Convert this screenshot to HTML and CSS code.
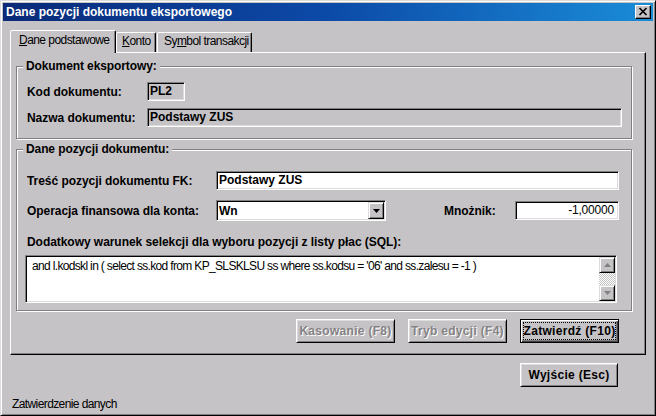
FILE: index.html
```html
<!DOCTYPE html>
<html lang="pl">
<head>
<meta charset="utf-8">
<title>Dane pozycji dokumentu eksportowego</title>
<link rel="stylesheet" href="styles.css">
</head>
<body>
<div class="window">
  <div class="titlebar">
    <span class="title">Dane pozycji dokumentu eksportowego</span>
    <span class="close-btn">
      <svg width="14" height="12" viewBox="0 0 14 12"><path d="M3.5 2 L10.5 9 M10.5 2 L3.5 9" stroke="#000" stroke-width="1.7" fill="none"/></svg>
    </span>
  </div>
  <div class="tabs">
    <div class="tab tab-active"><u>D</u>ane podstawowe</div>
    <div class="tab tab-konto"><u>K</u>onto</div>
    <div class="tab tab-symbol">Sy<u>m</u>bol transakcji</div>
  </div>
  <div class="panel">
    <div class="group group-doc">
      <div class="group-head"><span class="group-title">Dokument eksportowy:</span></div>
      <div class="row row-kod">
        <span class="label label-doc">Kod dokumentu:</span>
        <span class="field field-ro field-kod">PL2</span>
      </div>
      <div class="row row-nazwa">
        <span class="label label-doc">Nazwa dokumentu:</span>
        <span class="field field-ro field-nazwa">Podstawy ZUS</span>
      </div>
    </div>
    <div class="group group-pos">
      <div class="group-head"><span class="group-title">Dane pozycji dokumentu:</span></div>
      <div class="row row-tresc">
        <span class="label label-pos">Treść pozycji dokumentu FK:</span>
        <span class="field field-edit field-tresc">Podstawy ZUS</span>
      </div>
      <div class="row row-oper">
        <span class="label label-pos">Operacja finansowa dla konta:</span>
        <span class="combo">
          <span class="combo-text">Wn</span>
          <span class="combo-btn"><svg width="7" height="4" viewBox="0 0 7 4"><path d="M0 0 H7 L3.5 4 Z" fill="#000"/></svg></span>
        </span>
        <span class="label label-mn">Mnożnik:</span>
        <span class="field field-edit field-mn">-1,00000</span>
      </div>
      <div class="label sql-label">Dodatkowy warunek selekcji dla wyboru pozycji z listy płac (SQL):</div>
      <div class="memo">
        <div class="memo-text">and l.kodskl in ( select ss.kod from KP_SLSKLSU ss where ss.kodsu = '06' and ss.zalesu = -1 )</div>
        <div class="scrollbar">
          <span class="sb-btn"><svg width="7" height="4" viewBox="0 0 7 4"><path d="M0 4 H7 L3.5 0 Z" fill="#808080"/></svg></span>
          <span class="sb-track"></span>
          <span class="sb-btn"><svg width="7" height="4" viewBox="0 0 7 4"><path d="M0 0 H7 L3.5 4 Z" fill="#808080"/></svg></span>
        </div>
      </div>
    </div>
    <div class="actions">
      <div class="btn btn-disabled">Kasowanie (F8)</div>
      <div class="btn btn-disabled">Tryb edycji (F4)</div>
      <div class="btn btn-default"><span class="focus">Zatwierdź (F10)</span></div>
    </div>
  </div>
  <div class="footer">
    <div class="btn btn-exit">Wyjście (Esc)</div>
  </div>
  <div class="status">Zatwierdzenie danych</div>
</div>
</body>
</html>
```

FILE: styles.css
```css
* { box-sizing: border-box; }
html, body { margin: 0; padding: 0; }
body {
  width: 656px;
  height: 416px;
  overflow: hidden;
  background: #c6c3c6;
  font-family: "Liberation Sans", Arial, sans-serif;
  font-size: 12px;
  color: #000;
}
.window {
  width: 656px;
  height: 416px;
  border: 1px solid;
  border-color: #dcdcdc #000 #000 #dcdcdc;
  box-shadow: inset 1px 1px #fff, inset -1px -1px #808080;
  padding: 2px;
  background: #c6c3c6;
}
.titlebar {
  height: 18px;
  display: flex;
  align-items: center;
  justify-content: space-between;
  padding: 0 2px 0 3px;
  background: linear-gradient(to right, #0a2a78 0%, #0c4aa8 50%, #1a8cd8 100%);
  color: #fff;
  font-weight: bold;
  font-size: 12px;
}
.close-btn {
  width: 16px;
  height: 14px;
  background: #c6c3c6;
  border: 1px solid;
  border-color: #fff #000 #000 #fff;
  box-shadow: inset -1px -1px #808080;
  display: flex;
}
.close-btn svg { display: block; }

/* tabs */
.tabs {
  display: flex;
  align-items: flex-end;
  height: 22px;
  margin-top: 9px;
  padding-left: 7px;
  position: relative;
  z-index: 1;
}
.tab {
  height: 20px;
  border: 1px solid;
  border-bottom: none;
  border-color: #fff #000 transparent #fff;
  border-radius: 2px 2px 0 0;
  box-shadow: inset -1px 0 #808080;
  background: #c6c3c6;
  line-height: 14px;
  padding-top: 1px;
  letter-spacing: -0.55px;
  white-space: nowrap;
}
.tab-active {
  width: 106px;
  height: 23px;
  margin-bottom: -1px;
  padding-left: 8px;
  padding-top: 2px;
}
.tab-konto { width: 40px; padding-left: 5px; }
.tab-symbol { width: 95px; margin-left: 1px; padding-left: 6px; }

/* panel */
.panel {
  margin-left: 7px;
  width: 636px;
  height: 303px;
  border: 1px solid;
  border-color: #fff #000 #000 #fff;
  box-shadow: inset -1px -1px #808080;
  padding: 13px 12px 0 5px;
}
.group {
  width: 616px;
  border: 1px solid #808080;
  box-shadow: inset 1px 1px #fff, 1px 1px #fff;
  padding: 0 12px 0 10px;
}
.group-doc { padding-right: 9px; padding-bottom: 11px; }
.group-pos { margin-top: 10px; padding-bottom: 7px; }
.group-head {
  height: 14px;
  margin-top: -8px;
}
.group-title {
  display: inline-block;
  vertical-align: top;
  line-height: 14px;
  padding: 0 3px;
  margin-left: -4px;
  background: #c6c3c6;
  font-weight: bold;
  letter-spacing: -0.1px;
}
.row { display: flex; align-items: center; }
.label {
  font-weight: bold;
  letter-spacing: -0.05px;
  white-space: nowrap;
  flex-shrink: 0;
}
.label-doc { width: 120px; }
.label-pos { width: 189px; }
.label-mn { width: 71px; margin-left: auto; }
.row-kod { margin-top: 9px; height: 19px; }
.row-nazwa { margin-top: 7px; height: 19px; }
.row-tresc { margin-top: 15px; height: 19px; }
.row-oper { margin-top: 10px; height: 21px; }
.sql-label { margin-top: 14px; line-height: 14px; }

.field {
  flex-shrink: 0;
  height: 19px;
  border: 1px solid;
  border-color: #808080 #fff #fff #808080;
  box-shadow: inset 1px 1px #000, inset -1px -1px #dcdcdc;
  padding: 0 2px;
  line-height: 17px;
  font-weight: bold;
  letter-spacing: 0;
  white-space: nowrap;
}
.field-ro { background: #c6c3c6; }
.field-edit { background: #fff; }
.field-kod { width: 38px; }
.field-nazwa { width: 475px; }
.field-tresc { width: 403px; }
.field-mn {
  width: 104px;
  text-align: right;
  padding-right: 4px;
  font-weight: normal;
  letter-spacing: -0.2px;
}

.combo {
  flex-shrink: 0;
  width: 170px;
  height: 21px;
  border: 1px solid;
  border-color: #808080 #fff #fff #808080;
  box-shadow: inset 1px 1px #000, inset -1px -1px #dcdcdc;
  background: #fff;
  padding: 1px;
  display: flex;
  align-items: center;
}
.combo-text {
  flex: 1;
  padding-left: 1px;
  font-weight: bold;
}
.combo-btn {
  width: 16px;
  height: 17px;
  background: #c6c3c6;
  border: 1px solid;
  border-color: #dcdcdc #000 #000 #dcdcdc;
  box-shadow: inset 1px 1px #fff, inset -1px -1px #808080;
  display: flex;
  align-items: center;
  justify-content: center;
}
.combo-btn svg, .sb-btn svg { display: block; }

.memo {
  margin-top: 6px;
  margin-left: -2px;
  width: 592px;
  height: 48px;
  border: 1px solid;
  border-color: #808080 #fff #fff #808080;
  box-shadow: inset 1px 1px #000, inset -1px -1px #dcdcdc;
  padding: 1px;
  background: #fff;
  display: flex;
}
.memo-text {
  flex: 1;
  padding: 2px 0 0 5px;
  line-height: 14px;
  letter-spacing: -0.66px;
  white-space: nowrap;
  overflow: hidden;
}
.scrollbar {
  width: 16px;
  display: flex;
  flex-direction: column;
}
.sb-btn {
  height: 16px;
  background: #c6c3c6;
  border: 1px solid;
  border-color: #dcdcdc #000 #000 #dcdcdc;
  box-shadow: inset 1px 1px #fff, inset -1px -1px #808080;
  display: flex;
  align-items: center;
  justify-content: center;
}
.sb-track {
  flex: 1;
  background: repeating-conic-gradient(#fff 0 25%, #c6c3c6 0 50%) 0 0 / 2px 2px;
}

.actions {
  display: flex;
  justify-content: flex-end;
  gap: 13px;
  margin-top: 8px;
  padding-right: 14px;
}
.btn {
  width: 99px;
  height: 24px;
  border: 1px solid;
  border-color: #fff #000 #000 #fff;
  box-shadow: inset 1px 1px #dcdcdc, inset -1px -1px #808080;
  display: flex;
  align-items: center;
  justify-content: center;
  font-weight: bold;
  letter-spacing: 0.3px;
  white-space: nowrap;
  background: #c6c3c6;
}
.btn-disabled {
  color: #848284;
  text-shadow: 1px 1px #fff;
}
.btn-default {
  border-color: #000;
  box-shadow: inset 1px 1px #fff, inset -1px -1px #404040, inset -2px -2px #808080;
  align-items: stretch;
}
.focus {
  flex: 1;
  margin: 2px;
  border: 1px dotted #000;
  display: flex;
  align-items: center;
  justify-content: center;
}
.footer {
  display: flex;
  justify-content: flex-end;
  padding-right: 35px;
  margin-top: 8px;
}
.btn-exit { width: 98px; }
.status {
  margin-top: 10px;
  padding-left: 9px;
  line-height: 14px;
  letter-spacing: -0.6px;
}
```
